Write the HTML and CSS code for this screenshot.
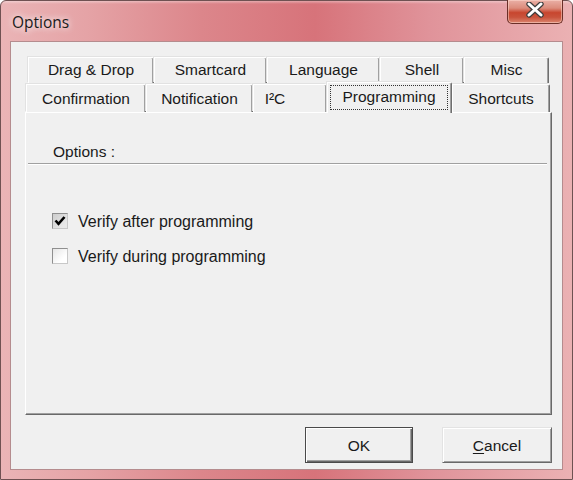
FILE: index.html
```html
<!DOCTYPE html>
<html>
<head>
<meta charset="utf-8">
<link rel="stylesheet" href="styles.css">
</head>
<body>
<div class="window">
  <div class="titlebar">
    <span class="title">Options</span>
    <div class="close">
      <svg width="20" height="16" viewBox="0 0 20 16">
        <path d="M4 2 L16 13 M16 2 L4 13" stroke="#3d3d3d" stroke-width="5.4" stroke-linecap="round"/>
        <path d="M4 2 L16 13 M16 2 L4 13" stroke="#ffffff" stroke-width="3" stroke-linecap="round"/>
      </svg>
    </div>
  </div>
  <div class="client">
    <div class="tabrow row1">
      <div class="tab t-dd">Drag &amp; Drop</div>
      <div class="tab t-sc">Smartcard</div>
      <div class="tab t-lang">Language</div>
      <div class="tab t-shell">Shell</div>
      <div class="tab t-misc">Misc</div>
    </div>
    <div class="tabrow row2">
      <div class="tab t-conf">Confirmation</div>
      <div class="tab t-notif">Notification</div>
      <div class="tab t-i2c">I²C</div>
      <div class="tab t-prog selected"><span class="focus">Programming</span></div>
      <div class="tab t-short">Shortcuts</div>
    </div>
    <div class="panel">
      <div class="group-label">Options :</div>
      <div class="group-line"></div>
      <div class="checks">
        <div class="check-row">
          <span class="box checked">
            <svg width="14" height="14" viewBox="0 0 14 14"><polyline points="2.5,6.5 5.5,9.8 11.5,3" fill="none" stroke="#000" stroke-width="2.6"/></svg>
          </span>
          <span class="check-text">Verify after programming</span>
        </div>
        <div class="check-row">
          <span class="box"></span>
          <span class="check-text">Verify during programming</span>
        </div>
      </div>
    </div>
    <div class="buttons">
      <div class="btn default">OK</div>
      <div class="btn"><u>C</u>ancel</div>
    </div>
  </div>
</div>
</body>
</html>
```

FILE: styles.css
```css
html, body {
  margin: 0;
  padding: 0;
  width: 573px;
  height: 480px;
  overflow: hidden;
  background: #ffffff;
}

.window {
  width: 573px;
  height: 480px;
  box-sizing: border-box;
  border: 1px solid #6f5152;
  border-radius: 6px 6px 0 0;
  background:
    linear-gradient(180deg, rgba(255,255,255,0.35) 0px, rgba(255,255,255,0) 3px),
    linear-gradient(90deg, #eab4b6 0%, #e5a3a6 15%, #dc868b 35%, #d7737a 55%, #e0939a 75%, #ebb1b3 100%);
  padding: 0 9px 9px 9px;
  display: flex;
  flex-direction: column;
  font-family: "Liberation Sans", Arial, sans-serif;
}

.titlebar {
  height: 40px;
  display: flex;
  justify-content: space-between;
  align-items: center;
}

.title {
  margin-left: 2px;
  margin-top: 1px;
  font-family: "Open Sans", "Noto Sans", sans-serif;
  font-size: 15.5px;
  color: #1a1a1a;
  text-shadow: 0 0 6px rgba(255,255,255,0.9), 0 0 10px rgba(255,255,255,0.6);
}

.close {
  align-self: flex-start;
  margin-top: -1px;
  width: 56px;
  height: 24px;
  box-sizing: border-box;
  border: 1px solid #6a2f28;
  border-top: none;
  border-radius: 0 0 5px 5px;
  background: linear-gradient(180deg, #eab0a6 0%, #dc8c7c 35%, #c8462f 55%, #c9533c 75%, #dc8670 100%);
  box-shadow: inset 0 0 0 1px rgba(255,220,210,0.5);
  display: flex;
  align-items: center;
  justify-content: center;
  padding-bottom: 4px;
}

.client {
  flex: 1;
  box-sizing: border-box;
  border: 1px solid #b58c8e;
  background: #f0f0f0;
  padding: 15px 10px 6px 14px;
  display: flex;
  flex-direction: column;
  color: #1a1a1a;
  font-size: 15.5px;
}

.tabrow {
  display: flex;
}

.row1 {
  margin-left: 3px;
  height: 26px;
}

.row2 {
  margin-left: 1px;
  height: 29px;
  align-items: flex-end;
}

.tab {
  box-sizing: border-box;
  display: flex;
  align-items: center;
  justify-content: center;
  background: #f0f0f0;
  border-top: 1px solid #ffffff;
  border-left: 1px solid #ffffff;
  border-right: 1px solid #6f6f6f;
  border-top-right-radius: 2px;
  box-shadow: inset -1px 0 #a0a0a0, -1px -1px 0 #e2e2e2;
  white-space: nowrap;
}

.row1 .tab {
  height: 26px;
  padding-bottom: 1px;
}

.row2 .tab {
  height: 28px;
  padding-top: 1px;
}

.t-dd { width: 126px; }
.t-sc { width: 113px; }
.t-lang { width: 113px; }
.t-shell { width: 84px; }
.t-misc { width: 85px; }

.t-conf { width: 120px; }
.t-notif { width: 107px; }
.t-i2c { width: 74px; padding-right: 30px; }
.t-prog { width: 125px; }
.t-short { width: 98px; }

.row2 .tab.selected {
  height: 31px;
  margin-bottom: -1px;
  position: relative;
  z-index: 1;
  padding: 2px 3px 3px 2px;
  align-items: stretch;
}

.focus {
  flex: 1;
  display: flex;
  align-items: center;
  justify-content: center;
  border: 1px dotted #333;
  padding-bottom: 2px;
}

.panel {
  flex: 1;
  box-sizing: border-box;
  border-top: 1px solid #ffffff;
  border-left: 1px solid #ffffff;
  border-right: 1px solid #696969;
  border-bottom: 1px solid #696969;
  box-shadow: inset -1px -1px #a0a0a0;
  display: flex;
  flex-direction: column;
}

.group-label {
  margin-top: 30px;
  margin-left: 27px;
  line-height: 18px;
  height: 18px;
}

.group-line {
  margin: 2px 4px 0 2px;
  height: 1px;
  background: #a0a0a0;
  border-bottom: 1px solid #ffffff;
}

.checks {
  margin-top: 47px;
  margin-left: 26px;
  display: flex;
  flex-direction: column;
  gap: 18px;
}

.check-row {
  display: flex;
  align-items: center;
  height: 17px;
}

.box {
  width: 16px;
  height: 16px;
  box-sizing: border-box;
  border: 1px solid #8f8f8f;
  border-right-color: #c8c8c8;
  border-bottom-color: #c8c8c8;
  background: linear-gradient(135deg, #e6e6e6 0%, #ffffff 70%);
  display: flex;
  align-items: center;
  justify-content: center;
}

.box.checked {
  background: linear-gradient(135deg, #cdcdcd 0%, #e8e8e8 80%);
}

.check-text {
  margin-left: 10px;
  margin-top: 2px;
  font-size: 16px;
}

.buttons {
  margin-top: 12px;
  display: flex;
  justify-content: flex-end;
  gap: 29px;
}

.btn {
  box-sizing: border-box;
  width: 110px;
  height: 36px;
  display: flex;
  align-items: center;
  justify-content: center;
  background: #f0f0f0;
  border-top: 1px solid #e3e3e3;
  border-left: 1px solid #e3e3e3;
  border-right: 1px solid #696969;
  border-bottom: 1px solid #696969;
  box-shadow: inset 1px 1px #ffffff, inset -1px -1px #a0a0a0;
  font-size: 15.5px;
  padding-top: 1px;
}

.btn.default {
  width: 108px;
  border: 1px solid #4a4a4a;
  box-shadow: inset 1px 1px #ffffff, inset -1px -1px #696969, inset -2px -2px #a0a0a0;
}

.btn u {
  text-decoration: underline;
  text-underline-offset: 2px;
}
```
